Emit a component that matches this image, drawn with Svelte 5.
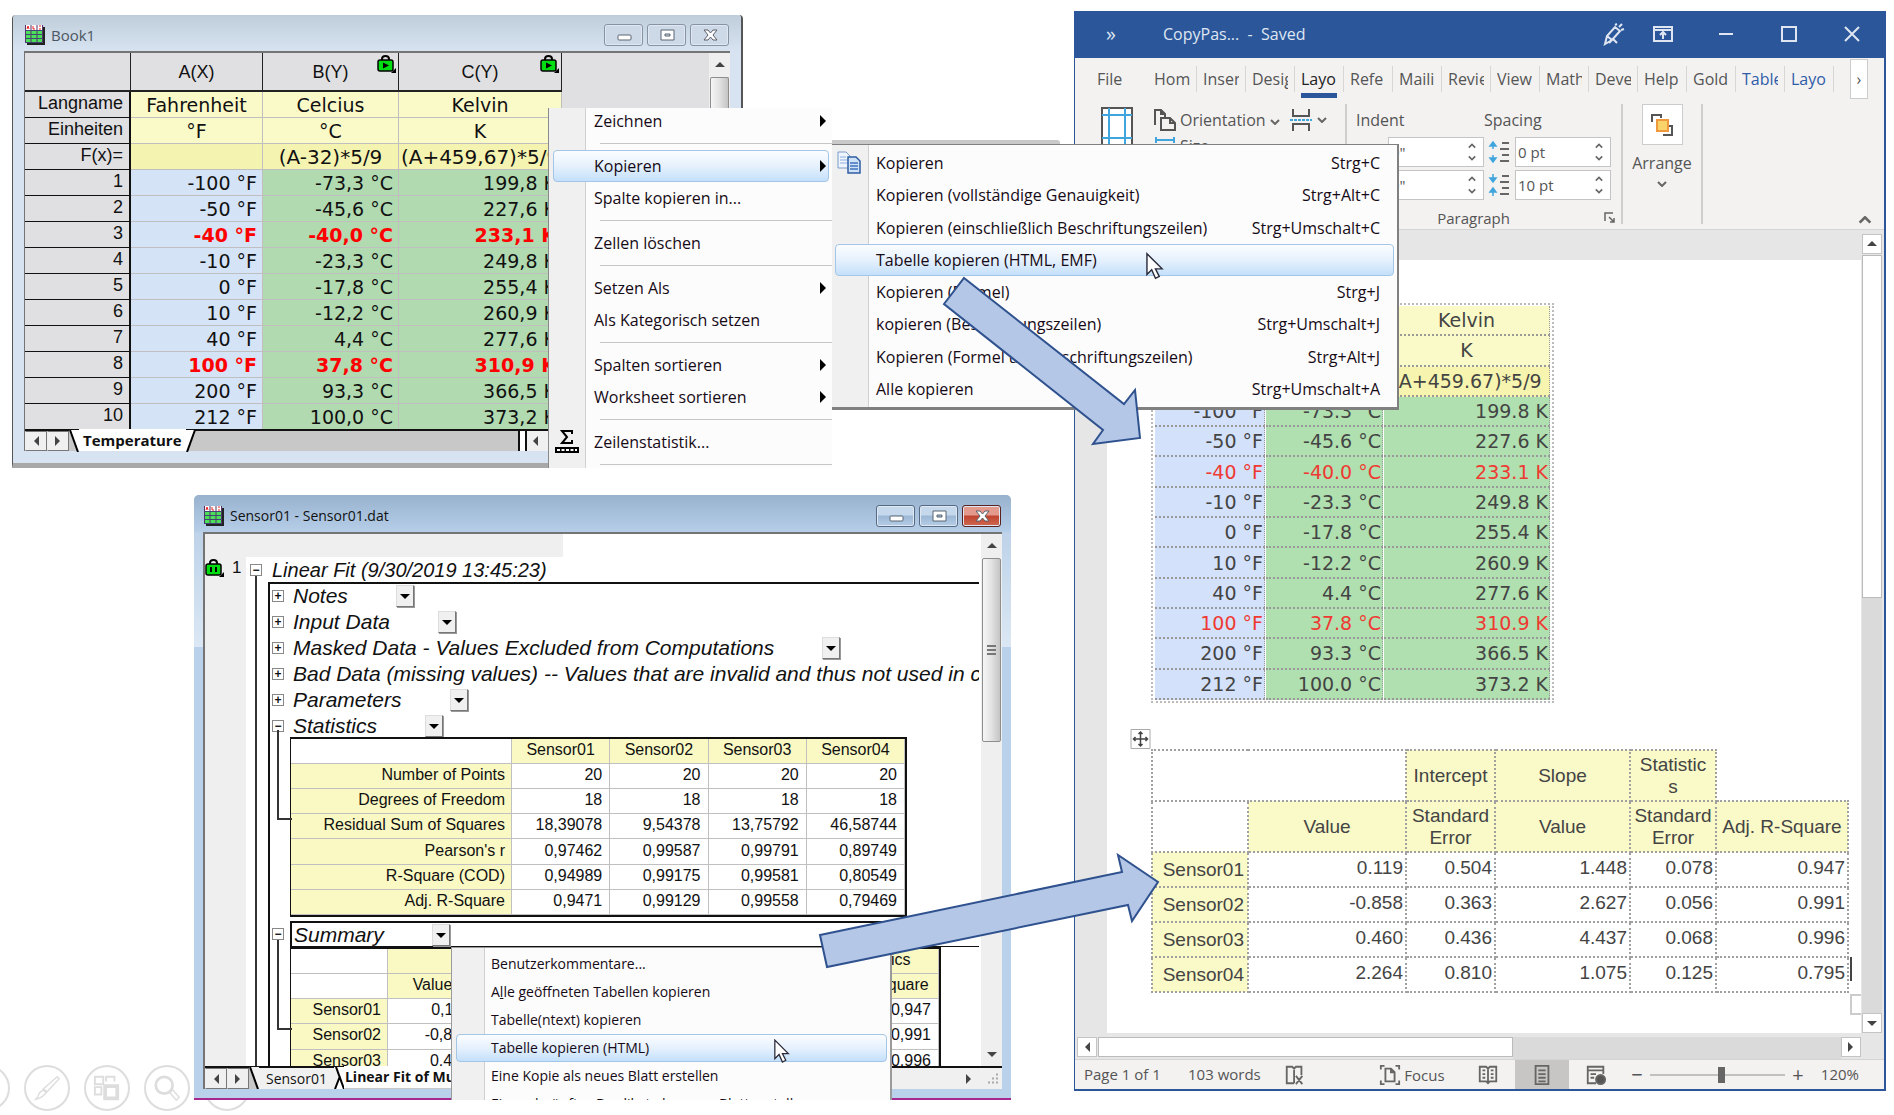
<script>
  const sheetMeta = [
    ['Langname', 'Fahrenheit', 'Celcius', 'Kelvin'],
    ['Einheiten', '°F', '°C', 'K'],
    ['F(x)=', '', '(A-32)*5/9', '(A+459,67)*5/9']
  ];
  const temps = [
    ['-100', '-73,3', '199,8'],
    ['-50', '-45,6', '227,6'],
    ['-40', '-40,0', '233,1'],
    ['-10', '-23,3', '249,8'],
    ['0', '-17,8', '255,4'],
    ['10', '-12,2', '260,9'],
    ['40', '4,4', '277,6'],
    ['100', '37,8', '310,9'],
    ['200', '93,3', '366,5'],
    ['212', '100,0', '373,2']
  ];
  const hot = [2, 7];
  const dot = (s) => s.replace(',', '.');

  const columnMenu = [
    { t: 'Zeichnen', sub: true }, null,
    { t: 'Kopieren', sub: true, on: true },
    { t: 'Spalte kopieren in...' }, null,
    { t: 'Zellen löschen' }, null,
    { t: 'Setzen Als', sub: true },
    { t: 'Als Kate', u: 'g', rest: 'orisch setzen' }, null,
    { t: 'Spalten sortieren', sub: true },
    { t: 'Worksheet sortieren', sub: true }, null,
    { t: 'Zeilenstatistik...', sigma: true }, null
  ];
  const copyMenu = [
    ['Kopieren', 'Strg+C'],
    ['Kopieren (vollständige Genauigkeit)', 'Strg+Alt+C'],
    ['Kopieren (einschließlich Beschriftungszeilen)', 'Strg+Umschalt+C'],
    ['Tabelle kopieren (HTML, EMF)', ''],
    ['Kopieren (Formel)', 'Strg+J'],
    ['kopieren (Beschriftungszeilen)', 'Strg+Umschalt+J'],
    ['Kopieren (Formel und Beschriftungszeilen)', 'Strg+Alt+J'],
    ['Alle kopieren', 'Strg+Umschalt+A']
  ];
  const tableMenu = [
    ['', '', 'Benutzerkommentare...'],
    ['A', 'l', 'le geöffneten Tabellen kopieren'],
    ['', '', 'Tabelle(ntext) kopieren'],
    ['', '', 'Tabelle kopieren (HTML)'],
    ['', '', 'Eine Kopie als neues Blatt erstellen'],
    ['', '', 'Ein verknüpftes Duplikat als neues Blatt erstellen']
  ];
  const nodes = [
    ['Notes', '+', true],
    ['Input Data', '+', true],
    ['Masked Data - Values Excluded from Computations', '+', true],
    ['Bad Data (missing values) -- Values that are invalid and thus not used in computations', '+', false],
    ['Parameters', '+', true],
    ['Statistics', '−', true]
  ];
  const stats = [
    ['Number of Points', '20', '20', '20', '20'],
    ['Degrees of Freedom', '18', '18', '18', '18'],
    ['Residual Sum of Squares', '18,39078', '9,54378', '13,75792', '46,58744'],
    ["Pearson's r", '0,97462', '0,99587', '0,99791', '0,89749'],
    ['R-Square (COD)', '0,94989', '0,99175', '0,99581', '0,80549'],
    ['Adj. R-Square', '0,9471', '0,99129', '0,99558', '0,79469']
  ];
  const summary = [
    ['Sensor01', '0,119', '0,504', '1,448', '0,078', '0,947'],
    ['Sensor02', '-0,858', '0,363', '2,627', '0,056', '0,991'],
    ['Sensor03', '0,460', '0,436', '4,437', '0,068', '0,996'],
    ['Sensor04', '2,264', '0,810', '1,075', '0,125', '0,795']
  ];
  const tabs = ['Hom', 'Inser', 'Desig', 'Layo', 'Refe', 'Maili', 'Revie', 'View', 'Math', 'Deve', 'Help', 'Gold', 'Table', 'Layo'];
</script>

{#snippet sheetIcon()}
  <svg class="sheet-icon" viewBox="0 0 20 20" aria-hidden="true">
    <rect x="2" y="2" width="18" height="18" fill="#222" />
    <rect x="0" y="0" width="18" height="18" fill="#fff" />
    <rect x="0" y="5" width="18" height="13" fill="#4be05a" />
    <path d="M2 4 3 1 4 4M8 1v3h2M14 1h2M14 4h2" stroke="#e22" fill="none" />
    <path d="M.5 0v18M6 0v18M12 0v18M17.500 0v18" stroke="#536" fill="none" />
    <path d="M0 5.500h18M0 9.500h18M0 13.500h18M0 17.500h18" stroke="#447" fill="none" />
  </svg>
{/snippet}

{#snippet caption(active)}
  <div class="caption" class:active>
    <button aria-label="Minimieren"><svg viewBox="0 0 38 20"><rect x="13" y="10" width="13" height="5" rx="1" fill="#fff" stroke="#5b6672" /></svg></button>
    <button aria-label="Maximieren"><svg viewBox="0 0 38 20"><path d="M13 5h13v10H13zM17 9h5v2h-5z" fill="#fff" fill-rule="evenodd" stroke="#5b6672" /></svg></button>
    <button class="x" aria-label="Schließen"><svg viewBox="0 0 38 20"><path d="M13 5h4l2.500 3L22 5h4l-4 5 4 5h-4l-2.500-3-2.500 3h-4l4-5z" fill="#fff" stroke="#5b5f6a" /></svg></button>
  </div>
{/snippet}

{#snippet lock(bars)}
  <svg class="lock" viewBox="0 0 20 18" aria-hidden="true">
    <path d="M5 6V4q0-3 3.500-3T12 4v2" fill="none" stroke="#000" stroke-width="2" />
    <rect x="1" y="5" width="15" height="11" rx="2" fill="#0d1" stroke="#000" stroke-width="1.500" />
    {#if bars}
      <path d="M6 8v5M11 8v5" stroke="#000" stroke-width="2" />
    {:else}
      <path d="M6 7.500v6l6-3z" fill="#000" />
    {/if}
    <path d="M19 13v5h-5z" fill="#000" />
  </svg>
{/snippet}

{#snippet tri(dir)}
  <svg class="tri" viewBox="0 0 10 10" aria-hidden="true">
    <path d={dir === 'l' ? 'M8 0v10L3 5z' : dir === 'r' ? 'M2 0v10l5-5z' : dir === 'u' ? 'M0 7h10L5 2z' : 'M0 3h10L5 8z'} />
  </svg>
{/snippet}

{#snippet chev(up)}
  <svg class="chev" viewBox="0 0 10 6" aria-hidden="true"><path d={up ? 'M1 5l4-4 4 4' : 'M1 1l4 4 4-4'} /></svg>
{/snippet}

{#snippet pointer()}
  <svg class="pointer" viewBox="0 0 19 29" aria-hidden="true">
    <path d="M1 1v22l5-5 4 9 4-2-4-8h7z" fill="#fff" stroke="#2a2a3a" stroke-width="1.500" />
  </svg>
{/snippet}

<main class="desktop">
  <nav class="show-tools" aria-label="Präsentation">
    <button aria-label="Zurück"></button>
    <button aria-label="Stift">
      <svg viewBox="0 0 30 30"><path d="M26 3l2 2-13 14-4-3zM11 17l3 3q-3 5-11 7 3-3 4-7z" fill="none" stroke="#ddd" stroke-width="1.500" /></svg>
    </button>
    <button aria-label="Alle Folien">
      <svg viewBox="0 0 30 30"><path d="M2 3h9v8H2zM14 8V3h9v5M2 14h7v8H2z" fill="none" stroke="#ddd" stroke-width="2" /><path d="M11 11h17v17H11zM15 15v9h9v-9z" fill="#ddd" fill-rule="evenodd" /></svg>
    </button>
    <button aria-label="Zoom">
      <svg viewBox="0 0 30 30"><circle cx="12" cy="12" r="9" fill="none" stroke="#ddd" stroke-width="3" /><path d="M18 20l3-3 7 8-3 3z" fill="none" stroke="#ddd" stroke-width="1.500" /></svg>
    </button>
    <button aria-label="Mehr"></button>
  </nav>

  <section class="win book">
    <header>{@render sheetIcon()}<h1>Book1</h1>{@render caption(false)}</header>
    <div class="frame">
      <div class="sheet">
        <table class="grid">
          <colgroup><col class="c0" /><col class="c1" /><col class="c2" /><col class="c3" /></colgroup>
          <thead>
            <tr><th></th><th>A(X)</th><th>B(Y){@render lock(false)}</th><th>C(Y){@render lock(false)}</th></tr>
          </thead>
          <tbody>
            {#each sheetMeta as row, i}
              <tr class="meta" class:formula={i === 2}>
                <th scope="row">{row[0]}</th><td>{row[1]}</td><td>{row[2]}</td><td>{row[3]}</td>
              </tr>
            {/each}
            {#each temps as t, i}
              <tr class:hot={hot.includes(i)}>
                <th scope="row">{i + 1}</th><td class="f">{t[0]} °F</td><td>{t[1]} °C</td><td>{t[2]} K</td>
              </tr>
            {/each}
          </tbody>
        </table>
        <div class="vbar"><button aria-label="Nach oben">{@render tri('u')}</button><div class="thumb"></div></div>
      </div>
      <div class="tabbar">
        <button class="step" aria-label="Vorheriges Blatt">{@render tri('l')}</button>
        <button class="step" aria-label="Nächstes Blatt">{@render tri('r')}</button>
        <svg class="slant" viewBox="0 0 10 22"><path d="M0 0h10v22H9z" fill="#fff" /><path d="M1 0l8 22" stroke="#000" stroke-width="2" /></svg>
        <button class="tab on">Temperature</button>
        <svg class="slant" viewBox="0 0 10 22"><path d="M0 0h9L1 22H0z" fill="#fff" /><path d="M9 0L1 22" stroke="#000" stroke-width="2" /></svg>
        <div class="rail"></div>
        <div class="hbar"><button aria-label="Nach links">{@render tri('l')}</button></div>
      </div>
    </div>
  </section>

  <section class="win sensor">
    <header>{@render sheetIcon()}<h1>Sensor01 - Sensor01.dat</h1>{@render caption(true)}</header>
    <div class="frame">
      <div class="sheet">
        <div class="report">
          <div class="strip"></div>
          <div class="root">
            <div class="gutter">{@render lock(true)}<span>1</span></div>
            <div class="tree">
              <div class="title"><button class="box" aria-label="Zuklappen">−</button><em>Linear Fit (9/30/2019 13:45:23)</em></div>
              <div class="branch">
                <ul>
                  {#each nodes as [name, mark, drop]}
                    <li>
                      <button class="box" aria-label={'Knoten ' + name}>{mark}</button><em>{name}</em>
                      {#if drop}<button class="drop" aria-label={'Menü ' + name}>{@render tri('d')}</button>{/if}
                    </li>
                  {/each}
                </ul>
                <div class="leaf">
                  <table class="stat">
                    <colgroup><col class="s0" /><col /><col /><col /><col /></colgroup>
                    <thead><tr><th class="empty"></th><th>Sensor01</th><th>Sensor02</th><th>Sensor03</th><th>Sensor04</th></tr></thead>
                    <tbody>
                      {#each stats as [label, ...vals]}
                        <tr><th scope="row">{label}</th>{#each vals as v}<td>{v}</td>{/each}</tr>
                      {/each}
                    </tbody>
                  </table>
                </div>
                <div class="sumhead">
                  <button class="box" aria-label="Summary zuklappen">−</button>
                  <div><em>Summary</em><button class="drop" aria-label="Menü Summary">{@render tri('d')}</button></div>
                </div>
                <div class="leaf">
                  <table class="stat sum">
                    <colgroup><col class="u0" /><col class="u1" /><col /><col /><col /><col class="u5" /></colgroup>
                    <thead>
                      <tr><th class="empty"></th><th colspan="2"></th><th colspan="2"></th><th>Statistics</th></tr>
                      <tr><th class="empty"></th><th>Value</th><th></th><th></th><th></th><th>Adj. R-Square</th></tr>
                    </thead>
                    <tbody>
                      {#each summary.slice(0, 3) as [label, ...vals]}
                        <tr><th scope="row">{label}</th>{#each vals as v}<td>{v}</td>{/each}</tr>
                      {/each}
                    </tbody>
                  </table>
                </div>
              </div>
            </div>
          </div>
        </div>
        <div class="vbar">
          <button aria-label="Nach oben">{@render tri('u')}</button>
          <div class="thumb"><i></i><i></i><i></i></div>
          <button aria-label="Nach unten">{@render tri('d')}</button>
        </div>
      </div>
      <div class="tabbar">
        <button class="step" aria-label="Vorheriges Blatt">{@render tri('l')}</button>
        <button class="step" aria-label="Nächstes Blatt">{@render tri('r')}</button>
        <svg class="slant" viewBox="0 0 10 22"><path d="M0 0h10v22H9z" fill="#f0f0f0" /><path d="M1 0l8 22" stroke="#000" stroke-width="2" /></svg>
        <button class="tab">Sensor01</button>
        <svg class="slant" viewBox="0 0 10 22"><path d="M0 0h10v22H0z" fill="#fff" /><path d="M0 0h4l2 9-5 13H0z" fill="#f0f0f0" /><path d="M1 22l5-13M2 0l8 22" fill="none" stroke="#000" stroke-width="2" /></svg>
        <button class="tab on">Linear Fit of Multiple</button>
        <div class="hbar"><button aria-label="Nach rechts">{@render tri('r')}</button></div>
        <svg class="grip" viewBox="0 0 20 20"><path d="M14 6h2M14 10h2M14 14h2M10 10h2M10 14h2M6 14h2" stroke="#aaa" stroke-width="2" /></svg>
      </div>
    </div>
  </section>

  <section class="word">
    <header>
      <span class="more">»</span>
      <h1>CopyPas... &nbsp;- &nbsp;Saved</h1>
      <div class="ctl">
        <button aria-label="Stift"><svg viewBox="0 0 24 24"><path d="M4 22l2-8 8-9 5 4-8 9zM6 14l5 4M14 3l2-1M18 5l3-3M20 8l3-1M8 21l4-4 4 4" /></svg></button>
        <button aria-label="Menüband"><svg viewBox="0 0 24 24"><path d="M3 5h18v14H3zM3 8h18M12 17v-6M9 13l3-3 3 3" /></svg></button>
        <button aria-label="Minimize"><svg viewBox="0 0 24 24"><path d="M5 12h14" /></svg></button>
        <button aria-label="Maximize"><svg viewBox="0 0 24 24"><path d="M5 5h14v14H5z" /></svg></button>
        <button aria-label="Close"><svg viewBox="0 0 24 24"><path d="M5 5l14 14M19 5L5 19" /></svg></button>
      </div>
    </header>
    <nav class="tabs">
      <button class="file">File</button>
      {#each tabs as t, i}
        <button class:cur={i === 3} class:ctx={i > 11}><span>{t}</span></button>
      {/each}
      <button class="scroll" aria-label="Weitere Registerkarten">›</button>
    </nav>
    <div class="ribbon">
      <div class="group setup">
        <svg class="margins" viewBox="0 0 32 48"><path d="M1 1h30v46H1z" fill="#fff" stroke="#555" stroke-width="2" /><path d="M8 1v46M24 1v46M1 8h30M1 31h30" stroke="#41a5dd" stroke-width="2" /></svg>
        <div class="stack">
          <div class="line">
            <svg class="orient" viewBox="0 0 24 24"><path d="M2 17V2h6l4 4v4M8 2v4h4M8 10h9l5 5v7H8zM17 10v5h5" fill="none" stroke="#555" stroke-width="2" /></svg>
            <button>Orientation{@render chev(false)}</button>
            <button class="breaks" aria-label="Breaks"><svg class="orient" viewBox="0 0 24 24"><path d="M4 1v7h16V1M4 23v-7h16v7" fill="none" stroke="#555" stroke-width="2" /><path d="M1 12h22" stroke="#41a5dd" stroke-width="2" stroke-dasharray="3 1" /></svg>{@render chev(false)}</button>
          </div>
          <div class="line">
            <svg class="orient" viewBox="0 0 24 24"><path d="M3 3v6M21 3v6M3 6h18" stroke="#41a5dd" stroke-width="2" /></svg>
            <button>Size</button>
          </div>
        </div>
      </div>
      <div class="group para">
        <div class="fields">
          <span class="lab">Indent</span><span class="lab">Spacing</span>
          <span></span><label class="num"><input aria-label="Indent left" value={'0"'} /><i>{@render chev(true)}{@render chev(false)}</i></label>
          <svg class="sp" viewBox="0 0 24 24"><path d="M5 3v6M2 6l3-4 3 4zM5 15v6M2 18l3 4 3-4z" fill="#41a5dd" stroke="#41a5dd" stroke-width="1.500" /><path d="M14 3h7M12 9h9M14 15h7M12 21h9" stroke="#666" stroke-width="2" /></svg>
          <label class="num"><input aria-label="Spacing before" value="0 pt" /><i>{@render chev(true)}{@render chev(false)}</i></label>
          <span></span><label class="num"><input aria-label="Indent right" value={'0"'} /><i>{@render chev(true)}{@render chev(false)}</i></label>
          <svg class="sp" viewBox="0 0 24 24"><path d="M5 1v6M2 5l3 4 3-4zM5 17v6M2 19l3-4 3 4z" fill="#41a5dd" stroke="#41a5dd" stroke-width="1.500" /><path d="M14 3h7M12 9h9M14 15h7M12 21h9" stroke="#666" stroke-width="2" /></svg>
          <label class="num"><input aria-label="Spacing after" value="10 pt" /><i>{@render chev(true)}{@render chev(false)}</i></label>
        </div>
        <div class="foot"><span>Paragraph</span>
          <svg viewBox="0 0 12 12"><path d="M1 9V1h8M5 5l5 5M10 6v4H6" fill="none" stroke="#666" stroke-width="1.500" /></svg>
        </div>
      </div>
      <div class="group arrange">
        <button>
          <span class="tile"><svg viewBox="0 0 24 24"><path d="M2 9V2h9v3M13 22h9v-9h-3" fill="none" stroke="#555" stroke-width="2" /><path d="M7 7h11v11H7z" fill="#fbd36b" stroke="#f0983c" stroke-width="2" /></svg></span>
          Arrange
          {@render chev(false)}
        </button>
      </div>
      <button class="collapse" aria-label="Menüband reduzieren">{@render chev(true)}</button>
    </div>

    <div class="doc">
      <div class="canvas">
        <article class="page">
          <table class="wt one">
            <colgroup><col class="w0" /><col class="w1" /><col /></colgroup>
            <tbody>
              <tr class="y"><td>Fahrenheit</td><td>Celcius</td><td>Kelvin</td></tr>
              <tr class="y"><td>°F</td><td>°C</td><td>K</td></tr>
              <tr class="y2"><td></td><td>(A-32)*5/9</td><td>(A+459.67)*5/9</td></tr>
              {#each temps as t, i}
                <tr class:hot={hot.includes(i)}><td class="f">{dot(t[0])} °F</td><td>{dot(t[1])} °C</td><td>{dot(t[2])} K</td></tr>
              {/each}
            </tbody>
          </table>
          <div class="second">
            <svg class="anchor" viewBox="0 0 20 20"><path d="M.5.5h19v19H.5z" fill="#fff" stroke="#aaa" /><path d="M10 3v14M3 10h14M8 5l2-2 2 2M8 15l2 2 2-2M5 8l-2 2 2 2M15 8l2 2-2 2" fill="none" stroke="#444" stroke-width="1.500" /></svg>
            <table class="wt two">
              <colgroup><col class="t0" /><col class="t1" /><col class="t2" /><col class="t3" /><col class="t4" /><col /></colgroup>
              <thead>
                <tr><td colspan="2"></td><th>Intercept</th><th>Slope</th><th>Statistic<br />s</th></tr>
                <tr><td></td><th>Value</th><th>Standard Error</th><th>Value</th><th>Standard Error</th><th>Adj. R-Square</th></tr>
              </thead>
              <tbody>
                {#each summary as [label, ...vals]}
                  <tr><th scope="row">{label}</th>{#each vals as v}<td>{dot(v)}</td>{/each}</tr>
                {/each}
              </tbody>
            </table>
            <span class="caret"></span>
            <span class="endmark"></span>
          </div>
        </article>
        <div class="wh">
          <button aria-label="Scroll left">{@render tri('l')}</button><div class="thumb"></div><div class="track"></div><button aria-label="Scroll right">{@render tri('r')}</button>
        </div>
      </div>
      <div class="wv"><button aria-label="Scroll up">{@render tri('u')}</button><div class="thumb"></div><div class="track"></div><button aria-label="Scroll down">{@render tri('d')}</button></div>
    </div>

    <footer>
      <span class="pg">Page 1 of 1</span><span class="wc">103 words</span>
      <button aria-label="Proofing"><svg viewBox="0 0 24 24"><path d="M11 5v16M3 5v16h8M3 5V3h6l2 2 2-2h6v9M13 22l7-9M13 13l7 9" /></svg></button>
      <button class="focus"><svg viewBox="0 0 24 24"><path d="M2 6V2h4M18 2h4v4M2 18v4h4M18 22h4v-4M7 5h6l4 4v10H7zM13 5v4h4" /></svg>Focus</button>
      <button aria-label="Read"><svg viewBox="0 0 24 24"><path d="M12 5v16M3 3h7l2 2 2-2h7v16h-7l-2 2-2-2H3zM6 7h3M6 11h3M6 15h3M15 7h3M15 11h3M15 15h3" /></svg></button>
      <button class="sel" aria-label="Print layout"><svg viewBox="0 0 24 24"><path d="M5 2h14v20H5zM8 7h8M8 11h8M8 15h8M8 19h8" /></svg></button>
      <button aria-label="Web layout"><svg viewBox="0 0 24 24"><path d="M12 21H3V3h17v8M3 7h17M6 11h6M6 15h4" /><circle cx="17" cy="17" r="5" fill="#555" /></svg></button>
      <span class="zoom"><b>−</b><input type="range" aria-label="Zoom" min="0" max="100" value="53" /><b>+</b></span>
      <span class="pct">120%</span>
    </footer>
  </section>

  <div class="ghost"></div>

  <div class="menu m1">
    <ul role="menu">
      {#each columnMenu as it}
        {#if it}
          <li role="none">
            <button role="menuitem" class:on={it.on}>
              <span>{it.t}{#if it.u}<u>{it.u}</u>{it.rest}{/if}</span>
              {#if it.sub}<svg class="more" viewBox="0 0 6 12"><path d="M0 0v12l6-6z" /></svg>{/if}
              {#if it.sigma}<svg class="glyph" viewBox="0 0 24 24"><path d="M17 4V1H7l5 6-5 6h10v-3" fill="none" stroke="#000" stroke-width="2" /><path d="M0 17h24v6H0z" /><path d="M2 20h20" stroke="#fff" stroke-width="2" stroke-dasharray="3 1.500" /></svg>{/if}
            </button>
          </li>
        {:else}
          <li role="separator"></li>
        {/if}
      {/each}
    </ul>
  </div>

  <div class="menu m2">
    <ul role="menu">
      {#each copyMenu as [label, key], i}
        <li role="none">
          <button role="menuitem" class:on={i === 3}>
            <span>{label}</span><span>{key}</span>
            {#if i === 0}
              <svg class="glyph" viewBox="0 0 24 24"><path d="M1 1h8l4 4v12H1z" fill="#eef5fd" stroke="#7b9cc9" /><path d="M3 6h6M3 9h8M3 12h8" stroke="#8fb2df" /><path d="M11 6h8l4 4v12H11z" fill="#cfe2f8" stroke="#2e5da3" stroke-width="1.500" /><path d="M13 12h8M13 15h8M13 18h8" stroke="#3f73bd" stroke-width="1.500" /></svg>
            {/if}
          </button>
        </li>
      {/each}
    </ul>
    {@render pointer()}
  </div>

  <div class="menu m3">
    <ul role="menu">
      {#each tableMenu as [a, u, b], i}
        <li role="none"><button role="menuitem" class:on={i === 3}><span>{a}{#if u}<u>{u}</u>{/if}{b}</span></button></li>
      {/each}
    </ul>
    {@render pointer()}
  </div>

  <svg class="arrow a1" viewBox="0 0 200 170" aria-hidden="true"><path d="M22 2l160 126 11-14 5 48-47 6 10-14L2 28z" /></svg>
  <svg class="arrow a2" viewBox="0 0 342 116" aria-hidden="true"><path d="M2 82l302-63-4-17 40 27-26 39-4-16L9 114z" /></svg>
</main>

<style>
  :global(body) { background: #fff; }
  .desktop { position: relative; min-height: 100vh; overflow: hidden; background: #fff; color: #111; font-family: "Open Sans", "Noto Sans", sans-serif; }
  * { box-sizing: border-box; }
  ul { list-style: none; margin: 0; padding: 0; }
  h1 { margin: 0; font-weight: 400; }
  button { font: inherit; color: inherit; background: none; border: 0; padding: 0; margin: 0; }
  table { border-spacing: 0; table-layout: fixed; }
  th { font-weight: 400; }
  th, td { padding: 0; white-space: nowrap; }
  .tri { width: 10px; height: 10px; display: block; fill: #444; }
  .chev { width: 10px; height: 6px; fill: none; stroke: #666; stroke-width: 2; }
  .lock { width: 20px; height: 18px; }

  .show-tools { position: absolute; left: -36px; top: 1065px; display: flex; gap: 14px; }
  .show-tools button { width: 46px; height: 46px; border: 2px solid #ddd; border-radius: 50%; display: grid; place-items: center; background: #fff; }
  .show-tools svg { width: 28px; height: 28px; }

  /* Origin windows */
  .win { position: absolute; display: flex; flex-direction: column; }
  .win header { display: flex; align-items: center; height: 36px; flex: none; padding: 3px 0 0 12px; }
  .win h1 { flex: 1; padding-left: 6px; font-size: 15px; line-height: 20px; }
  .sheet-icon { width: 20px; height: 20px; }
  .caption { display: flex; gap: 4px; padding-right: 12px; }
  .caption button { width: 39px; height: 22px; border: 1px solid #8793a3; border-radius: 3px; background: #cdd9e7; box-shadow: inset 0 0 0 1px #dfe8f2; display: grid; place-items: center; }
  .caption svg { width: 38px; height: 20px; display: block; }
  .caption.active button { background: linear-gradient(#c5d8ec 45%, #9cb8d6 50%, #b5cde6); border-color: #566c86; }
  .caption.active button.x { background: linear-gradient(#e39a8c 45%, #c0432f 50%, #cf6a50); border-color: #5a2320; }
  .frame { flex: 1; min-height: 0; display: flex; flex-direction: column; border: solid #747474; border-width: 2px 0 0 1px; background: #fff; }
  .sheet { flex: 1; min-height: 0; display: flex; overflow: hidden; }
  .vbar { width: 21px; margin-left: auto; background: #efefef; display: flex; flex-direction: column; align-items: center; }
  .vbar button { height: 24px; flex: none; }
  .vbar .thumb { width: 19px; border: 1px solid #8e8e8e; border-radius: 2px; background: linear-gradient(90deg, #f6f6f6, #e2e2e2 50%, #c4c4c4); display: flex; flex-direction: column; align-items: center; justify-content: center; gap: 2px; }
  .thumb i { width: 9px; height: 2px; background: #777; }
  .tabbar { flex: none; display: flex; height: 22px; border-top: 2px solid #111; background: #c8c8c8; }
  .step { width: 22px; border: 1px solid #777; border-left-color: #eee; background: #f0f0f0; display: grid; place-items: center; }
  .slant { width: 10px; height: 22px; flex: none; margin-top: -1px; }
  .tab { height: 21px; font-size: 14px; line-height: 18px; background: #f0f0f0; }
  .tab.on { background: #fff; font-weight: 700; margin-top: -2px; height: 22px; }
  .hbar { background: #f0f0f0; display: flex; align-items: center; }

  .book { left: 12px; top: 15px; width: 731px; height: 453px; border: 1px solid #555; border-width: 0 2px 5px 1px; border-bottom-color: #a8a8a8; border-radius: 4px 4px 0 0; background: #d7e3f1; }
  .book header { background: linear-gradient(#bfcddb, #d7e3f1); border-radius: 4px 4px 0 0; color: #4b5660; }
  .book .frame { margin: 0 11px 12px; background: #e0e0e2; }
  .grid { width: 537px; flex: none; background: #e0e0e2; font-family: "DejaVu Sans", sans-serif; font-size: 19px; line-height: 20px; }
  .c0 { width: 106px; } .c1 { width: 132px; } .c2 { width: 136px; }
  .grid th { font-size: 18px; }
  .grid thead th { height: 39px; position: relative; border: solid #222; border-width: 0 1px 2px 0; font-family: "Liberation Sans", sans-serif; }
  .grid .lock { position: absolute; right: 1px; top: 2px; }
  .grid tbody th { height: 26px; text-align: right; padding: 0 6px 3px 0; border: solid #111; border-width: 0 2px 1px 0; font-family: "Liberation Sans", sans-serif; }
  .grid td { height: 26px; text-align: right; padding-right: 5px; border: solid #bfbfbf; border-width: 0 1px 1px 0; background: #b1dab1; overflow: hidden; }
  .grid td.f { background: #d5e3f6; }
  .grid .meta td { text-align: center; padding: 0; background: #faf9c8; }
  .grid .formula td { background: #f5f3b0; font-size: 20px; }
  .grid .hot td { color: #f00; font-weight: 700; }
  .book .vbar .thumb { flex: 1; border-bottom: 0; }
  .book .tab { font-size: 15px; padding: 0 4px; }
  .book .rail { flex: 1; border-right: 2px solid #111; box-shadow: 5px 0 #fff; }
  .book .hbar { width: 205px; margin-left: 5px; border-left: 2px solid #111; padding-left: 3px; }

  .sensor { left: 194px; top: 495px; width: 817px; height: 605px; border-bottom: 2px solid #a8268f; background: linear-gradient(#b4cce5, #dbe7f4 152px, #b9d1ea 152px); border-radius: 5px 5px 0 0; }
  .sensor header { height: 37px; background: linear-gradient(#98b2ce, #b6cee8); border-radius: 5px 5px 0 0; padding: 4px 0 0 10px; }
  .sensor h1 { font-size: 14px; }
  .sensor .caption { padding-right: 10px; }
  .sensor .frame { margin: 0 9px 9px; border-left-width: 2px; }
  .report { flex: 1; min-width: 0; overflow: hidden; font-family: "Liberation Sans", sans-serif; display: flex; flex-direction: column; }
  .strip { height: 23px; width: 358px; flex: none; background: #efefef; }
  .root { display: flex; flex: 1; min-height: 0; }
  .gutter { width: 41px; flex: none; background: #efefef; display: flex; gap: 7px; font-size: 17px; line-height: 22px; }
  .gutter .lock { margin-top: 2px; }
  .tree { flex: 1; min-width: 0; padding-left: 4px; position: relative; font-size: 20px; line-height: 24px; }
  .tree em { white-space: nowrap; }
  .tree::before { content: ""; position: absolute; left: 9px; top: 18px; bottom: 0; border-left: 2px solid #333; }
  .title { height: 25px; display: flex; align-items: center; gap: 10px; }
  .box { width: 12px; height: 12px; flex: none; border: 1px solid #888; background: #fff; font: 700 12px/8px "Liberation Sans", sans-serif; position: relative; }
  .branch { margin-left: 18px; border: solid #111; border-width: 2px 0 0 2px; height: 600px; margin-right: 2px; font-size: 21px; }
  .branch ul { display: grid; grid-auto-rows: 1fr; height: 153px; overflow: hidden; }
  .branch li { display: flex; align-items: center; padding: 0 0 2px 2px; }
  .branch li em { margin: 0 48px 0 9px; }
  .drop { width: 18px; height: 22px; flex: none; border: 1px solid #ddd; border-color: #ddd #777 #777 #ddd; background: #f0f0f0; box-shadow: 1px 1px 0 #999; display: grid; place-items: center; }
  .drop .tri { width: 12px; fill: #000; }
  .leaf { padding-left: 20px; position: relative; }
  .leaf::before { content: ""; position: absolute; left: 7px; top: -7px; width: 13px; height: 88px; border: solid #333; border-width: 0 0 2px 2px; }
  .stat { width: 617px; height: 180px; border: 2px solid #111; border-left-width: 1px; font-size: 16px; line-height: 20px; }
  .s0 { width: 221px; }
  .stat th, .stat td { border: solid #c0c0c0; border-width: 0 1px 1px 0; height: 25px; padding-bottom: 2px; }
  .stat td { text-align: right; padding-right: 7px; }
  .stat th { background: #faf9c4; }
  .stat tbody th { text-align: right; padding-right: 6px; }
  .stat .empty { background: #fff; }
  .sumhead { margin-top: 4px; display: flex; align-items: center; gap: 6px; padding-left: 2px; }
  .sumhead > div { flex: 1; display: flex; align-items: center; height: 26px; border: solid #111; border-width: 2px 0 1px 2px; padding-left: 2px; }
  .sumhead em { width: 138px; }
  .sum { width: 651px; height: 130px; }
  .u0 { width: 97px; } .u1 { width: 90px; } .u5 { width: 120px; }
  .sensor .vbar .thumb { height: 184px; }
  .sensor .vbar button:last-child { margin-top: auto; }
  .sensor .tabbar { height: 23px; }
  .sensor .tab { padding: 0 7px; }
  .sensor .tab.on { padding: 0 1px; }
  .sensor .hbar { flex: 1; justify-content: flex-end; padding-right: 8px; }
  .grip { width: 20px; background: #f0f0f0; }

  /* Word window */
  .word { position: absolute; left: 1074px; right: 8px; top: 11px; height: 1080px; display: flex; flex-direction: column; border: solid #2b579a; border-width: 0 2px 2px 1px; background: #f3f2f1; color: #555; font-size: 16px; line-height: 20px; }
  .word header { height: 47px; flex: none; margin: 0 -1px; background: #2b579a; color: #dfe6f2; display: flex; align-items: center; padding: 0 0 2px 32px; }
  .word .more { width: 57px; font-size: 20px; }
  .word h1 { flex: 1; font-size: 16px; line-height: 20px; }
  .ctl { display: flex; gap: 39px; padding-right: 21px; }
  .ctl button:first-child { margin-right: -13px; }
  .ctl svg { width: 24px; height: 24px; display: block; fill: none; stroke: #dfe6f2; stroke-width: 2; }
  .tabs { display: flex; height: 42px; flex: none; align-items: center; }
  .tabs button { width: 49px; height: 26px; border-right: 1px solid #d8d6d4; padding-left: 6px; text-align: left; position: relative; }
  .tabs button.file { width: 73px; border: 0; padding-left: 22px; }
  .tabs span { display: block; width: 36px; overflow: hidden; }
  .tabs .ctx { color: #2f5ca8; }
  .tabs .cur { color: #222; }
  .tabs .cur::after { content: ""; position: absolute; left: 6px; bottom: -6px; width: 36px; height: 5px; background: #2b579a; }
  .tabs button.scroll { width: 18px; height: 40px; margin: 0 16px 0 auto; border: 1px solid #ccc; background: #fff; padding: 0; text-align: center; }
  .ribbon { display: flex; height: 130px; flex: none; padding: 4px 0 5px; border-bottom: 1px solid #d6d4d2; }
  .group { border-right: 2px solid #d0cecc; flex: none; }
  .setup { width: 272px; padding: 3px 0 0 26px; display: flex; gap: 20px; overflow: hidden; }
  .margins { width: 32px; height: 48px; }
  .line { display: flex; align-items: center; height: 26px; white-space: nowrap; gap: 3px; }
  .line .chev { margin-left: 4px; vertical-align: middle; }
  .breaks { padding-left: 6px; display: flex; align-items: center; }
  .orient { width: 24px; height: 24px; flex: none; }
  .para { width: 276px; padding-left: 9px; }
  .fields { display: grid; grid-template-columns: 32px 96px 31px 96px; grid-template-rows: 30px 30px 30px; row-gap: 3px; align-items: center; }
  .lab { grid-column: span 2; padding-top: 2px; }
  .sp { width: 24px; height: 24px; margin-left: 4px; }
  .num { display: flex; height: 30px; border: 1px solid #c4c4c4; background: #fff; }
  .num input { width: 60px; border: 0; padding: 0 0 0 2px; background: none; font: inherit; font-size: 15px; color: #555; }
  .num i { margin-left: auto; padding: 5px 7px; display: flex; flex-direction: column; justify-content: space-between; }
  .num .chev { width: 8px; }
  .foot { display: flex; align-items: center; justify-content: flex-end; padding: 8px 5px 0 0; font-size: 15px; gap: 94px; }
  .foot svg { width: 12px; height: 12px; }
  .arrange { width: 80px; }
  .arrange button { width: 78px; display: flex; flex-direction: column; align-items: center; gap: 8px; }
  .tile { width: 41px; height: 41px; border: 1px solid #ccc; background: #fff; display: grid; place-items: center; }
  .tile svg { width: 24px; height: 24px; }
  .collapse { display: flex; margin: auto 12px 0 auto; }
  .collapse .chev { width: 14px; height: 8px; }

  .doc { flex: 1; min-height: 0; display: flex; background: #e6e6e6; }
  .canvas { flex: 1; min-width: 0; display: flex; flex-direction: column; padding-top: 30px; }
  .page { flex: 1; min-height: 0; margin-left: 32px; background: #fff; padding: 43px 0 0 44px; color: #444; }
  .wt { font-size: 19px; line-height: 22px; }
  .one { width: 403px; height: 400px; border: 2px dotted #bbb; border-spacing: 1px 0; padding: 1px; font-family: "DejaVu Sans", sans-serif; }
  .w0 { width: 110px; } .w1 { width: 117px; }
  .one td { height: 30px; text-align: right; padding-right: 1px; border: dotted #999; border-width: 0 1px 2px 0; background: #b0dfb0; }
  .one td.f { background: #d3e1fa; }
  .one .y td, .one .y2 td { text-align: center; padding: 0; background: #faf9c8; }
  .one .y2 td { background: #f6f4ae; }
  .one .hot td { color: #ee3a32; }
  .second { position: relative; width: 698px; margin-top: 46px; }
  .anchor { position: absolute; left: -21px; top: -20px; width: 21px; height: 20px; }
  .two { width: 698px; border-collapse: collapse; font-family: "Liberation Sans", sans-serif; }
  .t0 { width: 96px; } .t1 { width: 158px; } .t2 { width: 89px; } .t3 { width: 135px; } .t4 { width: 86px; }
  .two td, .two th { height: 35px; border: 2px dotted #a0a0a0; white-space: normal; }
  .two td { text-align: right; padding: 0 2px 4px 0; }
  .two th { background: #faf9c8; }
  .two thead tr > * { height: 51px; }
  .two tbody th { text-align: right; padding-right: 3px; }
  .caret { position: absolute; right: -3px; bottom: 12px; width: 2px; height: 24px; background: #444; }
  .endmark { position: absolute; right: -12px; bottom: -22px; width: 11px; height: 21px; border: 2px solid #ccc; border-right: 0; }
  .wh { display: flex; height: 22px; flex: none; margin-top: 4px; padding-left: 2px; }
  .wh button, .wv button { flex: none; width: 20px; height: 20px; background: #fff; border: 1px solid #c4c4c4; display: grid; place-items: center; }
  .wh .thumb { width: 415px; height: 20px; background: #fff; border: 1px solid #bbb; margin-left: 1px; }
  .track { flex: 1; background: #dadada; }
  .wv { width: 22px; padding: 4px 1px 26px; display: flex; flex-direction: column; margin-right: 1px; }
  .wv .thumb { height: 343px; background: #fff; border: 1px solid #bbb; margin-top: 1px; }

  footer { height: 30px; flex: none; display: flex; align-items: stretch; font-size: 15px; line-height: 28px; border-top: 1px solid #d6d4d2; }
  footer svg { width: 22px; height: 22px; fill: none; stroke: #666; stroke-width: 2; }
  footer button { display: flex; align-items: center; justify-content: center; width: 54px; }
  .pg { padding-left: 9px; width: 113px; }
  .wc { width: 80px; }
  footer .focus { width: 112px; margin-left: 44px; gap: 3px; padding-right: 20px; margin-right: -17px; }
  footer .sel { background: #c8c6c4; }
  .zoom { display: flex; align-items: center; margin-left: 8px; gap: 7px; }
  .zoom b { font-weight: 400; font-size: 20px; width: 12px; text-align: center; }
  .zoom input { appearance: none; width: 135px; height: 24px; margin: 0; background: linear-gradient(#c0c0c0, #c0c0c0) center / 100% 2px no-repeat; }
  .zoom input::-webkit-slider-thumb { appearance: none; width: 7px; height: 16px; background: #666; }
  .pct { margin: 0 25px 0 auto; }

  /* Context menus */
  .ghost { position: absolute; left: 832px; top: 140px; width: 228px; height: 4px; background: #c9c9c9; border-radius: 0 3px 0 0; }
  .menu { position: absolute; color: #160a16; font-size: 16px; line-height: 20px; background: #fcfcfc; }
  .menu button { position: relative; display: flex; justify-content: space-between; align-items: center; width: 100%; height: 100%; border: 1px solid transparent; border-radius: 4px; white-space: nowrap; }
  .menu button.on { border-color: #a3c5e6; background: linear-gradient(#fbfdff, #e6f1fd 50%, #c4e0fb); }
  .menu .more { width: 6px; height: 12px; }
  .glyph { position: absolute; width: 24px; height: 24px; left: 1px; }
  .m1 { left: 548px; top: 108px; width: 284px; height: 360px; overflow: hidden; border-left: 1px solid #8a8a8a; background: linear-gradient(90deg, #f0f0f0 36px, #d0d0d0 36px, #d0d0d0 37px, #fcfcfc 37px); }
  .m1 ul { margin-top: -3px; }
  .m1 li { height: 32px; padding: 0 3px 0 4px; }
  .m1 li[role="separator"] { height: 13px; padding: 0; }
  .m1 li[role="separator"]::before { content: ""; display: block; margin-left: 51px; padding-top: 6px; border-bottom: 1px solid #c6c6c6; }
  .m1 button { padding: 0 2px 0 40px; }
  .m2 { left: 832px; top: 144px; width: 567px; height: 266px; border: solid #808080; border-width: 1px 2px 3px 0; padding: 2px 0; background: linear-gradient(90deg, #f0f0f0 36px, #d0d0d0 36px, #d0d0d0 37px, #fcfcfc 37px); }
  .m2 ul { height: 100%; display: grid; grid-auto-rows: 1fr; }
  .m2 li { padding: 0 3px; }
  .m2 button { padding: 0 13px 0 40px; }
  .m3 { left: 451px; top: 947px; width: 441px; height: 153px; overflow: hidden; border: solid #9a9a9a; border-width: 1px 2px 0 1px; padding-top: 2px; font-size: 14px; background: linear-gradient(90deg, #f0f0f0 32px, #d0d0d0 32px, #d0d0d0 33px, #fcfcfc 33px); }
  .m3 li { height: 28px; padding: 0 3px 0 4px; }
  .m3 button { padding-left: 34px; }
  .menu u { text-decoration: underline; }
  .pointer { position: absolute; width: 18px; height: 29px; }
  .m2 .pointer { left: 314px; top: 107px; }
  .m3 .pointer { left: 322px; top: 91px; width: 16px; height: 25px; }

  .arrow { position: absolute; fill: #b4c7e7; stroke: #2f528f; stroke-width: 2; }
  .a1 { left: 942px; top: 276px; width: 200px; height: 170px; }
  .a2 { left: 818px; top: 853px; width: 342px; height: 116px; }
</style>
